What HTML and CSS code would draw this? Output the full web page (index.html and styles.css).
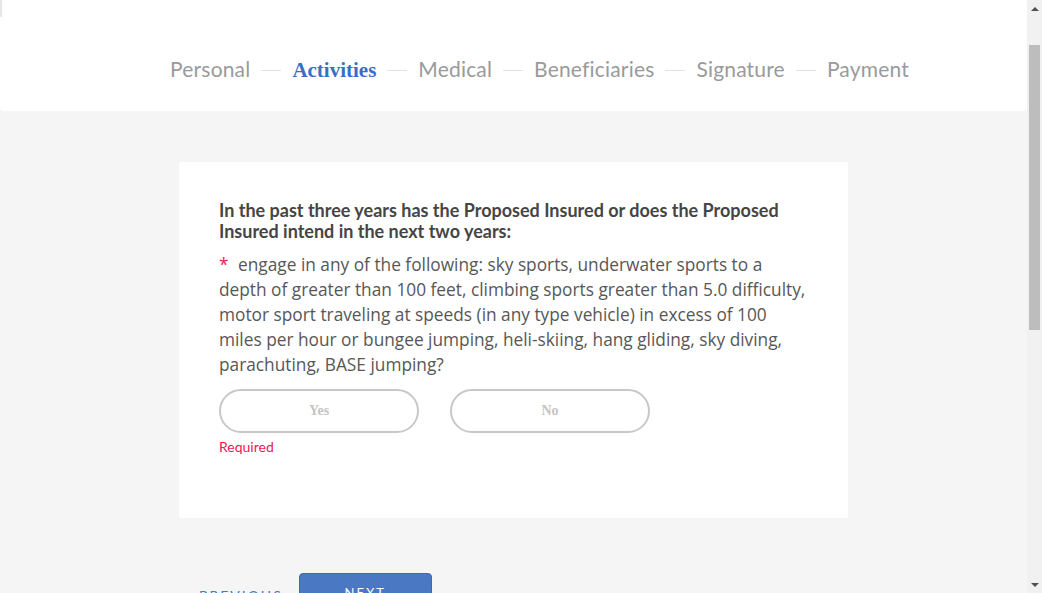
FILE: index.html
```html
<!DOCTYPE html>
<html lang="en">
<head>
<meta charset="utf-8">
<title>Activities</title>
<link rel="stylesheet" href="styles.css">
</head>
<body>
<div class="page">
  <header class="topbar">
    <div class="edge"></div>
    <ol class="steps">
      <li class="step">Personal</li>
      <li class="sep"></li>
      <li class="step active">Activities</li>
      <li class="sep"></li>
      <li class="step">Medical</li>
      <li class="sep"></li>
      <li class="step">Beneficiaries</li>
      <li class="sep"></li>
      <li class="step">Signature</li>
      <li class="sep"></li>
      <li class="step">Payment</li>
    </ol>
  </header>
  <main class="main">
    <section class="card">
      <h2 class="question">In the past three years has the Proposed Insured or does the Proposed Insured intend in the next two years:</h2>
      <p class="detail"><span class="req">*</span> engage in any of the following: sky sports, underwater sports to a<br>depth of greater than 100 feet, climbing sports greater than 5.0 difficulty,<br>motor sport traveling at speeds (in any type vehicle) in excess of 100<br>miles per hour or bungee jumping, heli-skiing, hang gliding, sky diving,<br>parachuting, BASE jumping?</p>
      <div class="choices">
        <button class="choice" type="button">Yes</button>
        <button class="choice" type="button">No</button>
      </div>
      <div class="error">Required</div>
    </section>
    <nav class="actions">
      <button class="prev" type="button">PREVIOUS</button>
      <button class="next" type="button">NEXT</button>
    </nav>
  </main>
</div>
<div class="scrollbar" aria-hidden="true">
  <div class="arrow up"></div>
  <div class="track"><div class="thumb"></div></div>
  <div class="arrow down"></div>
</div>
</body>
</html>
```
FILE: styles.css
```css
html, body {
  margin: 0;
  padding: 0;
}
body {
  background: #f5f5f5;
  font-family: "Open Sans", "Noto Sans", sans-serif;
  color: #555;
}
.page {
  width: 1027px;
}
.topbar {
  position: relative;
  background: #fff;
  height: 111px;
  border-radius: 0 0 4px 4px;
  box-sizing: border-box;
  padding-top: 55px;
}
.edge {
  position: absolute;
  left: 0;
  top: 0;
  width: 2px;
  height: 17px;
  background: #e6e6e6;
}
.steps {
  list-style: none;
  margin: 0;
  padding: 0 0 0 52px;
  display: flex;
  align-items: center;
  justify-content: center;
  gap: 10px;
}
.step {
  font-family: Lato, sans-serif;
  font-size: 21px;
  line-height: 26px;
  color: #9a9a9a;
  letter-spacing: 0.18px;
}
.step.active {
  font-family: "Liberation Serif", serif;
  font-weight: bold;
  font-size: 21px;
  color: #3a6ec4;
  letter-spacing: 0;
  padding-top: 2px;
}
.sep {
  width: 20px;
  height: 1px;
  background: #e2e2e2;
  margin: 2px 1px 0;
}
.main {
  padding-top: 51px;
  height: 1100px;
}
.card {
  width: 669px;
  box-sizing: border-box;
  margin: 0 0 0 179px;
  background: #fff;
  padding: 38px 40px 0;
  height: 356px;
}
.question {
  margin: 0;
  font-family: Lato, sans-serif;
  font-size: 18px;
  line-height: 21px;
  font-weight: bold;
  color: #454545;
}
.detail {
  margin: 10px 0 0;
  font-size: 17.3px;
  line-height: 25px;
  color: #575757;
  white-space: nowrap;
}
.req {
  color: #ec1d52;
  margin-right: 5px;
}
.choices {
  display: flex;
  gap: 31px;
  margin-top: 12px;
}
.choice {
  width: 200px;
  height: 44px;
  border: 2px solid #c8c8c8;
  border-radius: 22px;
  background: #fff;
  font-family: "Liberation Serif", serif;
  font-weight: bold;
  font-size: 14px;
  color: #c4c4c4;
  padding: 0;
}
.error {
  margin-top: 6px;
  font-family: Lato, sans-serif;
  font-size: 14px;
  line-height: 16px;
  color: #f0145a;
}
.actions {
  display: flex;
  align-items: flex-start;
  gap: 16px;
  margin: 55px 0 0 199px;
}
.prev {
  border: 0;
  background: none;
  padding: 14px 0 0;
  font-family: Lato, sans-serif;
  font-size: 14px;
  letter-spacing: 2px;
  color: #4a78c2;
}
.next {
  width: 133px;
  height: 40px;
  border: 1px solid #3f69ad;
  border-radius: 4px;
  background: #4a78c2;
  color: #fff;
  font-family: Lato, sans-serif;
  font-size: 13px;
  letter-spacing: 2px;
  padding: 0;
}
.scrollbar {
  position: fixed;
  top: 0;
  right: 0;
  width: 15px;
  height: 100%;
  background: #f1f1f1;
  display: flex;
  flex-direction: column;
}
.arrow {
  height: 17px;
  display: flex;
  align-items: center;
  justify-content: center;
}
.arrow.up::before {
  content: "";
  border-left: 4px solid transparent;
  border-right: 4px solid transparent;
  border-bottom: 4px solid #505050;
}
.arrow.down::before {
  content: "";
  border-left: 4px solid transparent;
  border-right: 4px solid transparent;
  border-top: 4px solid #505050;
}
.track {
  flex: 1;
  padding: 28px 2px 0;
}
.thumb {
  height: 285px;
  background: #bdbdbd;
}
```
